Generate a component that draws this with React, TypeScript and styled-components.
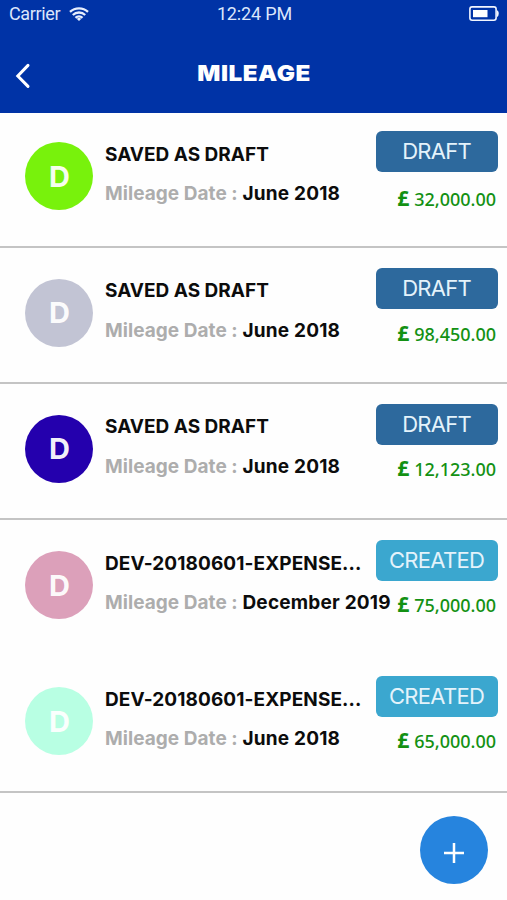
import React from "react";
import styled, { createGlobalStyle } from "styled-components";

const GlobalStyle = createGlobalStyle`
  *, *::before, *::after { box-sizing: border-box; }
  body {
    margin: 0;
    background: #fefefe;
    font-family: Inter, "Liberation Sans", sans-serif;
  }
`;

const Screen = styled.main`
  position: relative;
  display: flex;
  flex-direction: column;
  width: 507px;
  height: 900px;
  overflow: hidden;
  background: #fefefe;
`;

const Header = styled.header`
  height: 113px;
  flex: none;
  background: #0033a6;
  color: #fff;
`;

const StatusBar = styled.div`
  display: grid;
  grid-template-columns: 1fr auto 1fr;
  align-items: center;
  height: 27px;
  padding: 0 8px 0 9px;
  font-family: Roboto, sans-serif;
  font-size: 18px;
  line-height: 27px;
  color: #dbe6fb;
`;

const Carrier = styled.div`
  display: flex;
  align-items: center;
  gap: 9px;
  letter-spacing: -0.35px;
`;

const Clock = styled.span`
  padding-left: 1px;
  letter-spacing: -0.15px;
`;

const BatterySlot = styled.div`
  display: flex;
  justify-content: flex-end;
`;

const NavBar = styled.div`
  display: grid;
  grid-template-columns: 60px 1fr 60px;
  align-items: center;
  height: 92px;
`;

const BackButton = styled.button`
  display: flex;
  width: 16px;
  height: 26px;
  margin: 6px 0 0 15px;
  padding: 0;
  border: 0;
  background: none;
  color: inherit;
`;

const Title = styled.h1`
  margin: 0;
  padding-left: 1px;
  text-align: center;
  font-family: Inter, sans-serif;
  font-size: 22px;
  font-weight: 900;
  line-height: 28px;
  letter-spacing: 0.5px;
  transform: scaleX(1.1);
`;

const List = styled.ul`
  margin: -1.75px 0 0;
  padding: 0;
  list-style: none;
`;

const Row = styled.li<{ $divided: boolean }>`
  display: grid;
  grid-template-columns: 68px 258.2px 122px;
  column-gap: 12px;
  height: 136.25px;
  padding-left: 25.4px;
  border-bottom: 2px solid ${(p) => (p.$divided ? "#c4c4c4" : "transparent")};
`;

const Avatar = styled.div<{ $color: string }>`
  display: flex;
  align-items: center;
  justify-content: center;
  width: 68px;
  height: 68px;
  margin-top: 31px;
  border-radius: 50%;
  background: ${(p) => p.$color};
  color: #fffffff2;
  font-size: 29px;
  font-weight: 650;
`;

const Details = styled.div`
  padding-top: 30.5px;
  margin-left: -0.4px;
  white-space: nowrap;
  font-feature-settings: "calt" 0;
`;

const Name = styled.div<{ $tracking: number }>`
  font-size: 19px;
  font-weight: 650;
  line-height: 26px;
  letter-spacing: ${(p) => p.$tracking}px;
  color: #0c0c0c;
`;

const DateLine = styled.div`
  margin-top: 13.5px;
  font-size: 19px;
  font-weight: 650;
  line-height: 26px;
  letter-spacing: 0.2px;
  color: #0c0c0c;
`;

const DateLabel = styled.span`
  letter-spacing: 0.05px;
  color: #adadad;
`;

const Aside = styled.div`
  padding-top: 20.2px;
`;

const Badge = styled.div<{ $color: string }>`
  display: flex;
  align-items: center;
  justify-content: center;
  width: 122px;
  height: 41px;
  border-radius: 6px;
  background: ${(p) => p.$color};
  color: #e4f3fb;
  font-size: 22px;
  line-height: 41px;
  letter-spacing: -0.7px;
`;

const Amount = styled.div<{ $gap: number }>`
  display: flex;
  align-items: baseline;
  justify-content: flex-end;
  margin-top: ${(p) => p.$gap}px;
  padding-right: 1.5px;
  font-family: "Noto Sans", sans-serif;
  font-size: 18px;
  font-weight: 550;
  line-height: 26px;
  white-space: nowrap;
  color: #139113;
`;

const Currency = styled.span`
  margin-right: 5px;
  font-size: 21px;
  font-weight: 700;
`;

const AddButton = styled.button`
  position: absolute;
  right: 19px;
  bottom: 16px;
  display: flex;
  align-items: center;
  justify-content: center;
  width: 68px;
  height: 68px;
  padding: 6px 0 0;
  border: 0;
  border-radius: 50%;
  background: #2684de;
  color: #fff;
`;

const DRAFT = "#2d699d";
const CREATED = "#3ba7cf";

const entries = [
  { name: "SAVED AS DRAFT", date: "June 2018", status: "DRAFT", amount: "32,000.00", color: "#78f20c", gap: 12.4, divided: true },
  { name: "SAVED AS DRAFT", date: "June 2018", status: "DRAFT", amount: "98,450.00", color: "#c2c4d4", gap: 11.3, divided: true },
  { name: "SAVED AS DRAFT", date: "June 2018", status: "DRAFT", amount: "12,123.00", color: "#2400ad", gap: 10.4, divided: true },
  { name: "DEV-20180601-EXPENSE...", date: "December 2019", status: "CREATED", amount: "75,000.00", color: "#dca0ba", gap: 9.9, divided: false },
  { name: "DEV-20180601-EXPENSE...", date: "June 2018", status: "CREATED", amount: "65,000.00", color: "#b8ffe3", gap: 9.9, divided: true },
];

const WifiIcon = () => (
  <svg width="20" height="14" viewBox="0 0 20 14" fill="none" stroke="#e6eefd" strokeWidth="2.3">
    <path d="M1 4.9a13 13 0 0 1 18 0" />
    <path d="M3.8 8a9 9 0 0 1 12.4 0" />
    <path d="M6.5 10.9a5 5 0 0 1 7 0" />
    <path d="M10 14 7.9 11.9a3 3 0 0 1 4.2 0Z" fill="#e6eefd" stroke="none" />
  </svg>
);

const BatteryIcon = () => (
  <svg width="30" height="16" viewBox="0 0 30 16">
    <rect x="0.9" y="0.9" width="26.2" height="13.4" rx="2.2" fill="none" stroke="#f2f6ff" strokeWidth="1.6" />
    <rect x="4" y="4" width="14.5" height="7.2" fill="#fff" />
    <path d="M28 4.2c1.2.4 1.7 1.5 1.7 3.4s-.5 3-1.7 3.4Z" fill="#f2f6ff" />
  </svg>
);

export default function App() {
  return (
    <>
      <GlobalStyle />
      <Screen>
        <Header>
          <StatusBar>
            <Carrier>
              <span>Carrier</span>
              <WifiIcon />
            </Carrier>
            <Clock>12:24 PM</Clock>
            <BatterySlot>
              <BatteryIcon />
            </BatterySlot>
          </StatusBar>
          <NavBar>
            <BackButton aria-label="Back">
              <svg width="16" height="26" viewBox="0 0 16 26" fill="none" stroke="currentColor" strokeWidth="3" strokeLinecap="round">
                <path d="M13 2.4 2.8 13 13 23.4" />
              </svg>
            </BackButton>
            <Title>MILEAGE</Title>
          </NavBar>
        </Header>
        <List>
          {entries.map((e, i) => (
            <Row key={i} $divided={e.divided}>
              <Avatar $color={e.color}>D</Avatar>
              <Details>
                <Name $tracking={e.status === "DRAFT" ? 0 : 0.1}>{e.name}</Name>
                <DateLine>
                  <DateLabel>Mileage Date :</DateLabel> {e.date}
                </DateLine>
              </Details>
              <Aside>
                <Badge $color={e.status === "DRAFT" ? DRAFT : CREATED}>{e.status}</Badge>
                <Amount $gap={e.gap}>
                  <Currency>£</Currency>
                  {e.amount}
                </Amount>
              </Aside>
            </Row>
          ))}
        </List>
        <AddButton aria-label="Add mileage">
          <svg width="22" height="22" viewBox="0 0 22 22" fill="none" stroke="currentColor" strokeWidth="2.5">
            <path d="M11 1v20M1 11h20" />
          </svg>
        </AddButton>
      </Screen>
    </>
  );
}
